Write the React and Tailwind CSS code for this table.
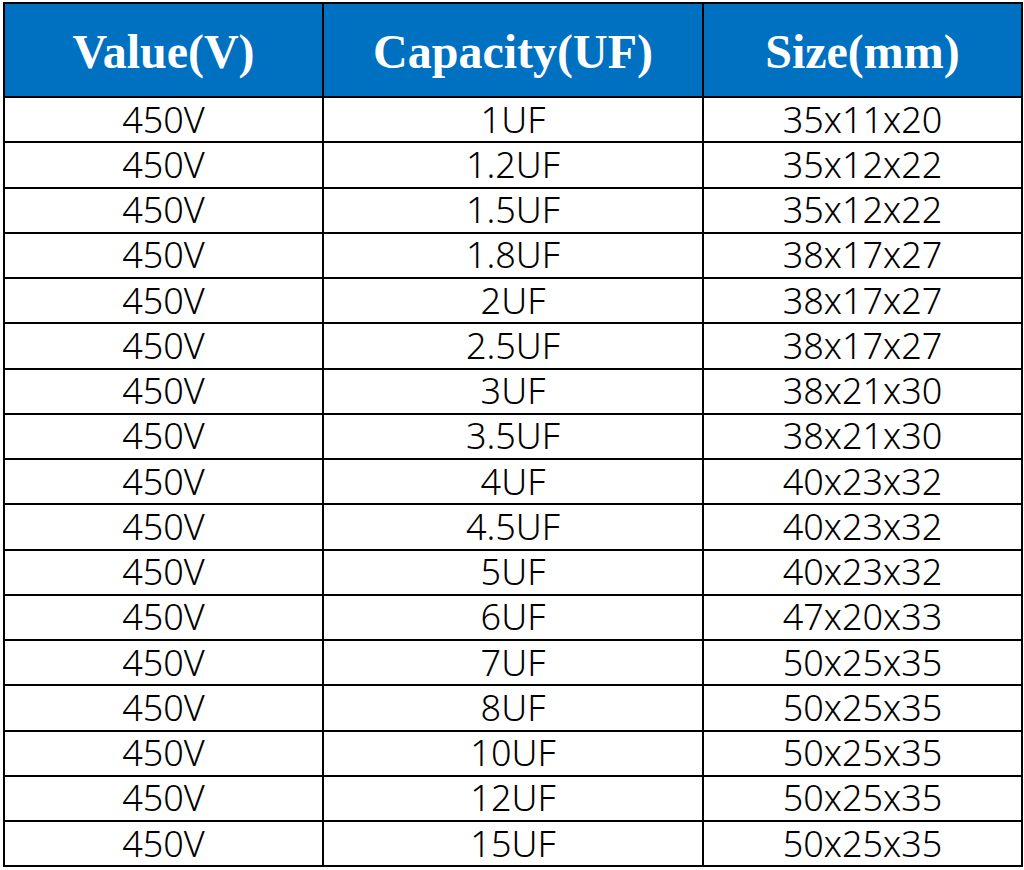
import React from "react";

const rows = [
  ["450V", "1UF", "35x11x20"],
  ["450V", "1.2UF", "35x12x22"],
  ["450V", "1.5UF", "35x12x22"],
  ["450V", "1.8UF", "38x17x27"],
  ["450V", "2UF", "38x17x27"],
  ["450V", "2.5UF", "38x17x27"],
  ["450V", "3UF", "38x21x30"],
  ["450V", "3.5UF", "38x21x30"],
  ["450V", "4UF", "40x23x32"],
  ["450V", "4.5UF", "40x23x32"],
  ["450V", "5UF", "40x23x32"],
  ["450V", "6UF", "47x20x33"],
  ["450V", "7UF", "50x25x35"],
  ["450V", "8UF", "50x25x35"],
  ["450V", "10UF", "50x25x35"],
  ["450V", "12UF", "50x25x35"],
  ["450V", "15UF", "50x25x35"],
];

export default function App() {
  return (
    <div className="w-[1024px] h-[870px] bg-white pt-[2px] pl-[3px]">
      <table className="table-fixed border-collapse w-[1018px]">
        <colgroup>
          <col className="w-[319px]" />
          <col className="w-[380px]" />
          <col className="w-[319px]" />
        </colgroup>
        <thead>
          <tr className="h-[94px] bg-[#0070c0]">
            {["Value(V)", "Capacity(UF)", "Size(mm)"].map((h) => (
              <th
                key={h}
                className="border-2 border-black p-0 pt-[3px] text-center align-middle text-white font-bold text-[48px] leading-none font-['Liberation_Serif',serif]"
              >
                {h}
              </th>
            ))}
          </tr>
        </thead>
        <tbody>
          {rows.map((r, i) => (
            <tr key={i} className="h-[45.25px]">
              {r.map((c, j) => (
                <td
                  key={j}
                  className="border-2 border-black p-0 text-center align-middle text-black text-[36px] font-light leading-none font-['Noto_Sans',sans-serif]"
                >
                  {c}
                </td>
              ))}
            </tr>
          ))}
        </tbody>
      </table>
    </div>
  );
}
